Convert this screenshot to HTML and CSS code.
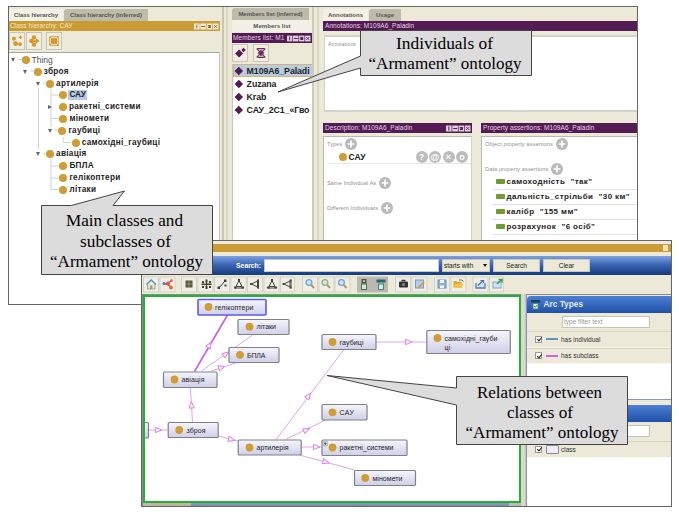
FILE: index.html
```html
<!DOCTYPE html>
<html lang="uk">
<head>
<meta charset="utf-8">
<title>Armament ontology</title>
<link rel="stylesheet" href="styles.css">
</head>
<body>
<svg width="0" height="0" class="defs">
  <defs>
    <symbol id="winbtns" viewBox="0 0 25 7">
      <g fill="#fff" fill-opacity=".8"><rect x="0" y="0.5" width="5.6" height="6"/><rect x="6.3" y="0.5" width="5.6" height="6"/><rect x="12.6" y="0.5" width="5.6" height="6"/><rect x="18.9" y="0.5" width="5.6" height="6"/></g>
      <g stroke="currentColor" fill="none"><path d="M2.8 1.5v4M7.2 3.5h4"/><rect x="14.4" y="2.5" width="2" height="2" fill="currentColor"/><path d="M20.2 2l3 3M23.2 2l-3 3" stroke-width=".8"/></g>
    </symbol>
    <symbol id="plus" viewBox="0 0 12 12"><circle cx="6" cy="6" r="6" fill="#b9b9b9"/><path d="M6 2.6v6.8M2.6 6h6.8" stroke="#fff" stroke-width="1.7"/></symbol>
    <linearGradient id="nodeFill" x1="0" y1="0" x2="0" y2="1"><stop offset="0" stop-color="#f6f6fd"/><stop offset="1" stop-color="#cfcfe8"/></linearGradient>
    <g id="tri"><path d="M-3 -2.7L3.4 0L-3 2.7Z" fill="#fbeafd" stroke="#d67fe2" stroke-width=".9"/></g>
  </defs>
</svg>

<main class="desktop">
<section class="window editor">
  <div class="col classes">
    <div class="tabs"><span class="tab on t1">Class hierarchy</span><span class="tab t2">Class hierarchy (inferred)</span></div>
    <div class="bar gold"><span class="ttl">Class hierarchy: САУ</span><svg class="wb"><use href="#winbtns"/></svg></div>
    <div class="tools">
      <span class="tool"><svg viewBox="0 0 16 16"><g fill="#d39a2b"><circle cx="4.5" cy="5" r="2.2"/><circle cx="6.5" cy="11" r="2.6"/><circle cx="11.5" cy="11.5" r="2.2"/><path d="M10 3h4v1.5h-4zM11.3 1.7h1.5v4h-1.5z"/></g><path d="M4.500 5v6h6" stroke="#d39a2b" fill="none"/></svg></span>
      <span class="tool"><svg viewBox="0 0 16 16"><g fill="#d39a2b"><circle cx="8" cy="4" r="2.5"/><circle cx="5" cy="8" r="2.6"/><circle cx="8" cy="12" r="2.5"/><path d="M7 7h3V4.800l4.500 3.200l-4.500 3.200V9H7z"/></g></svg></span>
      <span class="tool gap"><svg viewBox="0 0 16 16"><circle cx="8" cy="8" r="3.800" fill="#d39a2b"/><path d="M3 3l10 10M13 3L3 13M3 3h10v10H3z" stroke="#d39a2b" stroke-width="1" fill="none"/></svg></span>
    </div>
    <div class="tree">
      <svg class="lines" viewBox="0 0 210 188"><path d="M9 6.500h5M21 18h5M34 30h5M42 42h8M42 65.500h8M46 77h5M54 84v5.500h8M34 101h5M42 113h8M42 125h8M42 136.500h8M29.500 35v61M42 36v38M42 106v31" stroke="#c6c6c6" fill="none" stroke-width=".8"/></svg>
      <div class="node l0 plain"><i class="tw"></i><i class="dot"></i><span>Thing</span></div>
      <div class="node l1"><i class="tw"></i><i class="dot"></i><span>зброя</span></div>
      <div class="node l2"><i class="tw"></i><i class="dot"></i><span>артилерія</span></div>
      <div class="node l3"><i class="no"></i><i class="dot"></i><span class="sel">САУ</span></div>
      <div class="node l3"><i class="tw shut"></i><i class="dot"></i><span>ракетні_системи</span></div>
      <div class="node l3"><i class="no"></i><i class="dot"></i><span>міномети</span></div>
      <div class="node l3"><i class="tw"></i><i class="dot"></i><span>гаубиці</span></div>
      <div class="node l4"><i class="no"></i><i class="dot"></i><span>самохідні_гаубиці</span></div>
      <div class="node l2"><i class="tw"></i><i class="dot"></i><span>авіація</span></div>
      <div class="node l3"><i class="no"></i><i class="dot"></i><span>БПЛА</span></div>
      <div class="node l3"><i class="no"></i><i class="dot"></i><span>гелікоптери</span></div>
      <div class="node l3"><i class="no"></i><i class="dot"></i><span>літаки</span></div>
    </div>
  </div>
  <div class="split"></div>
  <div class="col members">
    <div class="tabs"><span class="tab t3">Members list (inferred)</span></div>
    <div class="tab on t4">Members list</div>
    <div class="bar purple"><span class="ttl">Members list: M1</span><svg class="wb"><use href="#winbtns"/></svg></div>
    <div class="tools">
      <span class="tool"><svg viewBox="0 0 16 16"><path d="M7 4l4.500 4.500L7 13L2.500 8.500zM12 2l2.500 2.500L12 7L9.500 4.500z" fill="#541a54"/></svg></span>
      <span class="tool gap2"><svg viewBox="0 0 16 16"><path d="M8 4l4 4l-4 4l-4-4z" fill="#7d3d70"/><path d="M3 3l10 10M13 3L3 13M4 3h8M4 13h8" stroke="#6b2a5c" stroke-width="1.200"/></svg></span>
    </div>
    <div class="list">
      <div class="item cur"><i></i><span>M109A6_Paladi</span></div>
      <div class="item"><i></i><span>Zuzana</span></div>
      <div class="item"><i></i><span>Krab</span></div>
      <div class="item"><i></i><span>САУ_2С1_«Гво</span></div>
    </div>
  </div>
  <div class="split thin"></div>
  <div class="col detail">
    <div class="tabs"><span class="tab on t5">Annotations</span><span class="tab t6">Usage</span></div>
    <div class="bar purple"><span class="ttl">Annotations: M109A6_Paladin</span></div>
    <div class="panel annot"><span class="cap">Annotations</span></div>
    <div class="pair">
      <div class="desc">
        <div class="bar purple"><span class="ttl">Description: M109A6_Paladin</span><svg class="wb"><use href="#winbtns"/></svg></div>
        <div class="panel">
          <div class="sec"><span class="cap">Types</span><svg class="pl"><use href="#plus"/></svg></div>
          <div class="type"><i class="dot"></i><b>САУ</b><span class="ops"><i>?</i><i>@</i><i>×</i><i>o</i></span></div>
          <div class="sec s2"><span class="cap">Same Individual As</span><svg class="pl"><use href="#plus"/></svg></div>
          <div class="sec s2"><span class="cap">Different Individuals</span><svg class="pl"><use href="#plus"/></svg></div>
        </div>
      </div>
      <div class="props">
        <div class="bar purple"><span class="ttl">Property assertions: M109A6_Paladin</span></div>
        <div class="panel">
          <div class="sec"><span class="cap">Object property assertions</span><svg class="pl"><use href="#plus"/></svg></div>
          <div class="sec s2"><span class="cap">Data property assertions</span><svg class="pl"><use href="#plus"/></svg></div>
          <div class="prop"><i></i><span>самоходність&nbsp; "так"</span></div>
          <div class="prop"><i></i><span>дальність_стрільби&nbsp; "30 км"</span></div>
          <div class="prop"><i></i><span>калібр&nbsp; "155 мм"</span></div>
          <div class="prop"><i></i><span>розрахунок&nbsp; "6 осіб"</span></div>
          <div class="prop last"><i></i><span>маса&nbsp; "27500 кг"</span></div>
        </div>
      </div>
    </div>
  </div>
</section>

<section class="window graphwin">
  <div class="goldbar"><i></i></div>
  <div class="search">
    <label>Search:</label><span class="field"></span><span class="select">starts with<i></i></span><span class="btn">Search</span><span class="btn b2">Clear</span>
  </div>
  <div class="iconbar">
    <svg viewBox="142 275 529 19">
      <g fill="#efeee6" stroke="#cfccbf" stroke-width=".8">
        <rect x="143.500" y="277" width="15" height="15"/><rect x="160" y="277" width="15" height="15"/>
        <rect x="181.500" y="277" width="15" height="15"/><rect x="198" y="277" width="15" height="15"/><rect x="214.500" y="277" width="15" height="15"/><rect x="231" y="277" width="15" height="15"/><rect x="247.500" y="277" width="15" height="15"/><rect x="264" y="277" width="15" height="15"/><rect x="280.500" y="277" width="14" height="15"/>
        <rect x="302.500" y="277" width="15" height="15"/><rect x="319" y="277" width="15" height="15"/><rect x="335" y="277" width="15" height="15"/>
        <rect x="395.500" y="277" width="15" height="15"/><rect x="412" y="277" width="15" height="15"/><rect x="434.500" y="277" width="15" height="15"/><rect x="451" y="277" width="15" height="15"/><rect x="473" y="277" width="15" height="15"/><rect x="489.500" y="277" width="14" height="15"/>
      </g>
      <rect x="357" y="276.500" width="31" height="16" fill="#b9b8b1"/>
      <path d="M147.500 284v5h7.500v-5" fill="#dce8e4" stroke="#809a9a" stroke-width=".8"/><path d="M146.500 284.500l4.700-4.500l4.700 4.500" fill="none" stroke="#5d91a0" stroke-width="1.300"/><rect x="150" y="285.500" width="2.400" height="3.500" fill="#b69b5c"/>
      <path d="M163 284h4M167 284l4-3M167 284l4 3" stroke="#d64c38" stroke-width="1.500"/><circle cx="164" cy="283.500" r="1.500" fill="#4f79bd"/><circle cx="168" cy="283.500" r="1.900" fill="#e0503d"/><circle cx="171.500" cy="280.500" r="1.500" fill="#d47866"/><circle cx="171" cy="287.500" r="1.900" fill="#e06932"/>
      <rect x="185.500" y="280.500" width="7" height="7" fill="#57573b"/><path d="M189 281v6M186 284h6" stroke="#9d9d80" stroke-width=".8"/>
      <g fill="#3e3e32"><path d="M202 281h2v2h-2zM205.500 279.500h2v3h-2zM209 281h2v2h-2zM201.500 283.500h10v1.400h-10zM202 286h2v2h-2zM205.500 286h2v3h-2zM209 286h2v2h-2zM206 281h1v7h-1z"/><path d="M217.500 286.500h2.500v2.500h-2.500zM224 279.500h2.500v2.500h-2.500zM224.500 284.500h2v2h-2z"/></g>
      <path d="M219 288l6-7" stroke="#3e3e32" stroke-width="1"/>
      <g id="up" fill="none" stroke="#45453a" stroke-width="1"><path d="M239 280.500l-3 6h6zM234.500 288h9"/><path d="M238 280h2M234 287.500h2.500M241.500 287.500h2.500" stroke-width="1.800"/></g><use href="#up" x="33"/>
      <g id="lf" fill="none" stroke="#45453a" stroke-width="1"><path d="M251.500 284l6-3v6zM258.500 279.500v9"/><path d="M251 283v2M258 279.500v2M258 286.500v2" stroke-width="1.800"/></g><use href="#lf" x="32.500"/>
      <g fill="none" stroke-width="1.300"><circle cx="309" cy="282.500" r="2.900" fill="#cde3f7" stroke="#78a1cc"/><path d="M311.300 285l2.700 3" stroke="#bf9368" stroke-width="2"/><circle cx="325" cy="282.500" r="2.900" fill="#d3ead0" stroke="#8caf84"/><path d="M327.300 285l2.700 3" stroke="#b69c5b" stroke-width="2"/><circle cx="341.500" cy="282.500" r="2.900" fill="#cde3f7" stroke="#78a1cc"/><path d="M343.800 285l2.700 3" stroke="#bf9368" stroke-width="2"/></g>
      <rect x="361.500" y="279" width="5" height="4.500" fill="#55544a"/><rect x="363" y="280" width="2" height="2" fill="#c6c348"/><rect x="361.500" y="284" width="5" height="5.500" fill="#d5e5d4" stroke="#46705e"/>
      <rect x="376.500" y="279.500" width="9" height="3" fill="#276b72"/><rect x="378.500" y="284" width="5" height="5.500" fill="#d7eee3" stroke="#46827a"/>
      <rect x="399" y="281.500" width="9" height="6" rx="1" fill="#333"/><path d="M401.500 280.500h4" stroke="#333" stroke-width="1.500"/><circle cx="403.500" cy="284.500" r="1.500" fill="#888"/>
      <rect x="415.500" y="280" width="8" height="8" fill="#b4cfed" stroke="#729cc9"/><path d="M418 288l6-6" stroke="#d59b4a" stroke-width="2"/>
      <rect x="438" y="280" width="8" height="8" fill="#8fb2dd" stroke="#6a8fbd"/><path d="M440 280h4v3h-4zM440 285.500h4v2.500h-4z" fill="#f4f6fa"/>
      <path d="M453.500 288v-7h3l1 1h4v6z" fill="#e3a72e"/><path d="M453.500 288l2-4h8l-2 4z" fill="#f2c454"/><path d="M459 280h3l1.500 1.500" stroke="#80734c" fill="none"/>
      <path d="M476 283v5h9v-5" fill="#d1e0f0" stroke="#557faf" stroke-width="1.300"/><path d="M478 285.500l4.500-4.500M480.500 280.500h3v2.500" stroke="#476f9c" fill="none" stroke-width="1.200"/>
      <rect x="493" y="282" width="8" height="6" fill="#cfe4f5" stroke="#6b96b9" stroke-width=".8"/><path d="M497 284l4-4M498.500 279.500h3.500v3" stroke="#35a24d" fill="none" stroke-width="1.500"/>
    </svg>
  </div>
  <div class="work">
    <div class="canvaswrap">
      <div class="canvas">
      <svg viewBox="145 297 373 205" font-family="Liberation Sans" font-size="7" fill="#222">
        <g stroke="#e2a5ec" stroke-width="1" fill="none">
          <path d="M148 430H167M192 422L190 388M201 371L252 335M211 371L235 363M218 436L237 441M276 439L343 350M286 439L325 420M301 447H321M299 455L354 470M376 342H426"/>
          <path d="M194 371.500L227 315" stroke="#c86add" stroke-width="1.800"/>
        </g>
        <use href="#tri" transform="translate(158 430)"/><use href="#tri" transform="translate(191 405) rotate(-93)"/><use href="#tri" transform="translate(209 345) rotate(-60)"/><use href="#tri" transform="translate(225.500 354) rotate(-35)"/><use href="#tri" transform="translate(221 367.500) rotate(-16)"/><use href="#tri" transform="translate(231 439.500) rotate(14)"/><use href="#tri" transform="translate(308 396) rotate(-53)"/><use href="#tri" transform="translate(306 430) rotate(-26)"/><use href="#tri" transform="translate(316 447)"/><use href="#tri" transform="translate(325.500 462) rotate(15)"/><use href="#tri" transform="translate(408 342)"/>
        <g fill="url(#nodeFill)" stroke="#808086" stroke-width="1.200">
          <rect x="138" y="422.500" width="10" height="15.500" rx="1"/>
          <rect x="197.500" y="299.500" width="68" height="15.500" rx="1" stroke="#5a5af0" stroke-width="1.600"/>
          <rect x="237.500" y="319.500" width="51" height="15" rx="1"/><rect x="228.500" y="347.500" width="50" height="15" rx="1"/>
          <rect x="163" y="372" width="53.500" height="15.500" rx="1"/><rect x="167.700" y="422.500" width="50" height="15" rx="1"/>
          <rect x="237.700" y="440" width="63" height="15" rx="1"/><rect x="321.500" y="334.500" width="54" height="15" rx="1"/>
          <rect x="426.300" y="330.500" width="83.500" height="23" rx="1"/><rect x="321.500" y="404.500" width="45" height="15.500" rx="1"/>
          <rect x="321.500" y="440" width="85" height="15.500" rx="1"/><rect x="354" y="470.500" width="61" height="15" rx="1"/>
        </g>
        <g fill="#cf9d35"><circle cx="208" cy="307" r="3.900"/><circle cx="249" cy="326.700" r="3.900"/><circle cx="239.500" cy="354.800" r="3.900"/><circle cx="174" cy="379.500" r="3.900"/><circle cx="178.700" cy="430" r="3.900"/><circle cx="249" cy="447.500" r="3.900"/><circle cx="332" cy="342" r="3.900"/><circle cx="437" cy="338" r="3.900"/><circle cx="332" cy="412.300" r="3.900"/><circle cx="332" cy="447.500" r="3.900"/><circle cx="364.700" cy="478" r="3.900"/></g>
        <rect x="322.500" y="441.500" width="4.500" height="4.500" fill="#d9d9dd" stroke="#999" stroke-width=".5"/><path d="M323.500 443.700h2.600M324.800 442.400v2.600" stroke="#444" stroke-width=".8"/>
        <text x="214.500" y="309.500" textLength="38.500">гелікоптери</text><text x="256" y="329.300" textLength="19.500">літаки</text><text x="246.500" y="357.500" textLength="18.500">БПЛА</text><text x="181" y="382" textLength="23">авіація</text><text x="186" y="432.500" textLength="19">зброя</text><text x="256" y="450" textLength="32">артилерія</text><text x="339" y="344.500" textLength="24">гаубиці</text><text x="444" y="340.500" textLength="53">самохідні_гауби</text><text x="444" y="349.500" textLength="5.800">ці</text><text x="339" y="414.800" textLength="14.500">САУ</text><text x="339" y="450" textLength="54">ракетні_системи</text><text x="372" y="480.500" textLength="30">міномети</text>
      </svg>
      </div>
      <div class="hscroll"><i></i></div>
    </div>
    <div class="vsplit"></div>
    <aside class="side">
      <div class="head"><svg viewBox="0 0 9 10"><path d="M0 0h9v2.500H0z" fill="#16405e"/><rect x="2" y="3.500" width="5" height="5.500" fill="#dff0dc" stroke="#4d8c74"/><path d="M3 6l1.300 1.300L6.200 5" stroke="#3a9a3a" fill="none"/></svg>Arc Types</div>
      <div class="filter"><span>type filter text</span></div>
      <div class="row"><i class="ck"></i><i class="ln blue"></i>has individual</div>
      <div class="row"><i class="ck"></i><i class="ln pink"></i>has subclass</div>
      <div class="blank"></div>
      <div class="head h2"></div>
      <div class="filter f2"><span></span></div>
      <div class="row r3"><i class="ck"></i><i class="box"></i>class</div>
    </aside>
  </div>
</section>

<svg class="callouts" viewBox="0 0 679 512">
  <g fill="#dcdcdc" stroke="#444" stroke-width="1">
    <path d="M41.500 205.500H71.500L124.500 191L113 205.500H212.500V274.500H41.500Z"/>
    <path d="M360.500 30.500H531.500V75.500H360.500V68L278 92L360.500 56Z"/>
    <path d="M456.500 376.500H627.500V444.500H456.500V405L327 375.500L456.500 388Z"/>
  </g>
  <g font-family="Liberation Serif" font-size="17.500" fill="#000">
    <text x="66" y="226" textLength="117" lengthAdjust="spacingAndGlyphs">Main classes and</text><text x="80" y="246.500" textLength="91" lengthAdjust="spacingAndGlyphs">subclasses of</text><text x="50" y="267" textLength="153" lengthAdjust="spacingAndGlyphs">“Armament” ontology</text>
    <text x="396" y="49" textLength="97" lengthAdjust="spacingAndGlyphs">Individuals of</text><text x="368.500" y="69" textLength="153" lengthAdjust="spacingAndGlyphs">“Armament” ontology</text>
    <text x="477" y="397.500" textLength="125" lengthAdjust="spacingAndGlyphs">Relations between</text><text x="507" y="417.500" textLength="66" lengthAdjust="spacingAndGlyphs">classes of</text><text x="465.500" y="438" textLength="153" lengthAdjust="spacingAndGlyphs">“Armament” ontology</text>
  </g>
</svg>
</main>
</body>
</html>
```
FILE: styles.css
```css
* { box-sizing: border-box; }
body { margin: 0; background: #fff; font-family: "Liberation Sans", sans-serif; font-size: 7px; color: #222; }
i { font-style: normal; display: block; flex: none; }
svg { display: block; flex: none; }
.defs { position: absolute; }
.desktop { position: relative; width: 679px; height: 512px; overflow: hidden; }
.window { position: absolute; overflow: hidden; white-space: nowrap; }
.callouts { position: absolute; left: 0; top: 0; width: 679px; height: 512px; }

.editor { left: 8px; top: 6px; width: 630px; height: 299px; border: 1px solid #666; background: #ece9d8; display: flex; }
.col { display: flex; flex-direction: column; flex: none; overflow: hidden; }
.classes { width: 211px; }
.members { width: 80px; }
.detail { width: 315px; }
.tabs { display: flex; height: 14px; padding-top: 2px; flex: none; }
.tab { background: #bdbbaa; height: 12px; line-height: 12px; font-size: 6px; font-weight: bold; color: #555; text-align: center; overflow: hidden; border-radius: 3px 0 0 0; flex: none; }
.tab.on { background: #f3f1e5; }
.t1 { width: 54px; letter-spacing: -.05px; }
.t2 { width: 84px; margin-left: 1px; letter-spacing: -.03px; }
.members .tabs { height: 13px; padding-top: 1px; }
.t3 { width: 77px; letter-spacing: -.02px; }
.t4 { width: 80px; letter-spacing: .05px; }
.t5 { width: 45px; }
.t6 { width: 32px; margin-left: 1px; }
.bar { height: 10px; display: flex; align-items: center; justify-content: space-between; color: #e3d3e3; font-size: 6.5px; line-height: 10px; padding: 0 1px 0 2px; flex: none; overflow: hidden; }
.gold { background: #cb9c36; color: #f9e9c5; padding-left: 1px; }
.purple { background: #541a54; }
.wb { width: 25px; height: 7px; color: #a06a20; }
.purple .wb { color: #541a54; }
.ttl { letter-spacing: .01em; }
.tools { display: flex; height: 21px; padding-top: 1px; flex: none; }
.tool { width: 16px; height: 18px; margin-right: 1px; background: #f0eee3; border: 1px solid #c8c5b6; display: flex; align-items: center; justify-content: center; }
.tool svg { width: 14px; height: 14px; }
.tool.gap { margin-left: 3px; }
.tool.gap2 { margin-left: 4px; }

.tree { position: relative; flex: 1; background: #fff; padding-top: 1px; border-top: 1px solid #aaa89d; border-right: 1px solid #c9c7bc; }
.lines { position: absolute; left: 0; top: 0; width: 210px; height: 188px; }
.node { position: relative; height: 11.82px; display: flex; align-items: center; font-weight: bold; font-size: 8.200px; color: #222; letter-spacing: .035em; }
.node.plain { font-weight: normal; color: #555; font-size: 8.500px; letter-spacing: 0; }
.node span { line-height: 10px; padding: 0 1px; margin-left: -.5px; }
.node .sel { background: #b5cbe5; letter-spacing: 0; }
.dot { width: 8px; height: 8px; border-radius: 50%; background: #cf9d35; margin-right: 1.5px; }
.tw { width: 0; height: 0; border: 2.5px solid transparent; border-top: 4.5px solid #666; border-bottom: 0; margin: 0 6.5px 0 2px; }
.tw.shut { border: 2.5px solid transparent; border-left: 4.5px solid #666; border-right: 0; margin: 0 6.5px 0 2.5px; }
.no { width: 13.5px; }
.l1 { padding-left: 12.3px; }
.l2 { padding-left: 24.6px; }
.l3 { padding-left: 36.9px; }
.l4 { padding-left: 49.2px; }

.split { width: 12px; flex: none; background: linear-gradient(90deg, #ece9d8 0 2px, #c6c6b2 2px 4px, #ece9d8 4px 6px, #dcdac4 6px 8px, #ece9d8 8px); }
.split.thin { width: 11px; background: linear-gradient(90deg, #d0cdbb 0 2px, #ece9d8 2px 5px, #dad7c3 5px 7px, #ece9d8 7px); }
.members .bar { margin-top: 1px; padding-left: 1px; }
.members .bar .ttl { letter-spacing: .02em; }
.members .wb { width: 24px; }
.list { flex: 1; background: #fff; border-left: 1px solid #c9c7bc; }
.item { height: 13px; display: flex; align-items: center; font-weight: bold; font-size: 8.800px; padding-left: 3px; color: #222; }
.item i { width: 5.600px; height: 5.600px; background: #541a54; transform: rotate(45deg); margin-right: 5px; }
.item span { letter-spacing: -.01em; }
.cur { background: #b9cce2; border: 1px solid #d5b56b; border-right: 0; padding-left: 2px; }

.panel { background: #fff; border: 1px solid #bcbab0; border-right-color: #d5d3c8; }
.annot { margin: 4px 0 0 1px; height: 77px; padding: 3px; border-width: 2px 0 2px 1px; border-color: #d4d2c9; flex: none; }
.cap { color: #929292; font-size: 5.200px; letter-spacing: .01em; }
.pair { flex: 1; display: flex; margin-top: 11px; }
.desc { width: 149px; margin-right: 9px; flex: none; display: flex; flex-direction: column; }
.props { flex: 1; display: flex; flex-direction: column; }
.pair .panel { flex: 1; margin-top: 3px; padding: 0 3px; }
.pair .cap { font-size: 5.700px; }
.sec { display: flex; align-items: center; height: 13px; gap: 3px; }
.pl { width: 12px; height: 12px; }
.type { display: flex; align-items: center; height: 14px; padding-left: 12px; border-bottom: 1px solid #e8e8e8; font-size: 8.500px; margin-right: -3px; }
.type b { flex: 1; }
.ops { display: flex; gap: 1.500px; padding-right: 3px; }
.ops i { width: 12px; height: 12px; border-radius: 50%; background: #bcbcbc; color: #fff; font: bold 9px/12px "Liberation Sans", sans-serif; text-align: center; }
.s2 { margin-top: 12px; }
.prop { height: 14.900px; margin: 0 -3px 0 8px; padding-left: 3px; border-bottom: 1px solid #e2e2e2; display: flex; align-items: center; font-weight: bold; font-size: 8px; letter-spacing: .05em; color: #222; }
.prop i { width: 9px; height: 5px; background: #719b35; border-radius: 1px; margin-right: 1.500px; }
.last { border-bottom: 0; }

.graphwin { left: 141px; top: 240px; width: 531px; height: 267px; border: 1px solid #666; background: #ece9d8; display: flex; flex-direction: column; }
.goldbar { height: 11px; flex: none; border-top: 3px solid #eeeade; background: #cb9c36; display: flex; justify-content: flex-end; padding: 1px 3px; }
.goldbar i { width: 5px; height: 6px; background: #f5e3b8; }
.search { margin-top: 4px; height: 19px; flex: none; background: linear-gradient(#7fa1e0, #3b66b5 45%, #163a7c); display: flex; align-items: center; }
.search label { width: 122px; text-align: right; padding-right: 3px; color: #fff; font-weight: bold; font-size: 6.800px; }
.field { width: 175px; height: 13px; background: #fff; border: 1px solid #cbc9bb; margin-right: 3px; }
.select { width: 48px; height: 13px; background: #ece9d8; border: 1px solid #c9c7ba; display: flex; align-items: center; justify-content: space-between; padding: 0 2px 0 1px; font-size: 6.500px; }
.select i { border: 2.500px solid transparent; border-top: 3px solid #111; border-bottom: 0; }
.btn { width: 47px; height: 13px; background: #ece9d8; border: 1px solid #c9c7ba; margin-left: 3px; font-size: 6.500px; line-height: 11px; text-align: center; }
.iconbar { height: 19px; flex: none; }
.iconbar svg { width: 529px; height: 19px; }
.work { flex: 1; display: flex; min-height: 0; }
.canvaswrap { width: 379px; flex: none; border-top: 1px solid #8a8a86; display: flex; flex-direction: column; border-left: 1px solid #8a8a86; }
.canvas { border: 2px solid #1fb431; background: #fff; height: 209px; overflow: hidden; }
.canvas svg { width: 374px; height: 205px; }
.hscroll { flex: 1; background: #bdbbaf; padding-left: 8px; }
.hscroll i { height: 3px; width: 358px; background: linear-gradient(90deg, #c3b299 0 40px, #7f95b1 40px); }
.vsplit { width: 5px; flex: none; background: #dcd9ca; border-right: 1px solid #c6c4b9; }
.side { flex: 1; background: linear-gradient(#ece9d8 0 160px, #fff 160px); border-left: 1px solid #8096cc; border-top: 1px solid #8a8a86; display: flex; flex-direction: column; }
.head { height: 17px; margin-top: 1px; flex: none; background: linear-gradient(#4c80d4, #1f50a8); color: #e4ebfb; font: bold 8.300px/17px "Liberation Sans", sans-serif; display: flex; align-items: center; padding-left: 4px; gap: 3.500px; border-radius: 4px 0 0 0; }
.head svg { width: 9px; height: 10px; }
.filter { height: 18px; flex: none; padding: 3px 0 0 35px; }
.filter span { display: block; width: 88px; height: 12px; border: 1px solid #c5c3b7; background: #fff; color: #999; font-size: 6.500px; line-height: 10px; padding-left: 1px; }
.row { height: 16.500px; flex: none; border-top: 1px solid #d8d5c5; border-bottom: 1px solid #f8f7f0; background: #ece9d8; display: flex; align-items: center; font-size: 6.500px; padding-left: 8px; color: #333; }
.ck { width: 7px; height: 7px; border: 1px solid #999; background: #fff; position: relative; margin-right: 4px; }
.ck::after { content: ""; position: absolute; left: 1.500px; top: -.5px; width: 2px; height: 4px; border: solid #222; border-width: 0 1px 1px 0; transform: rotate(40deg); }
.ln { width: 12px; height: 2px; margin-right: 3px; }
.blue { background: #5b9dc2; }
.pink { background: #ce62d8; }
.box { width: 13px; height: 9px; border: 1px solid #8b8b98; border-radius: 1px; background: #eeeefa; margin-right: 2px; }
.blank { height: 36px; background: #fff; flex: none; border-bottom: 1px solid #8096cc; }
.h2 { margin-top: 5px; border-radius: 0; }
.f2 { height: 19px; }
```
